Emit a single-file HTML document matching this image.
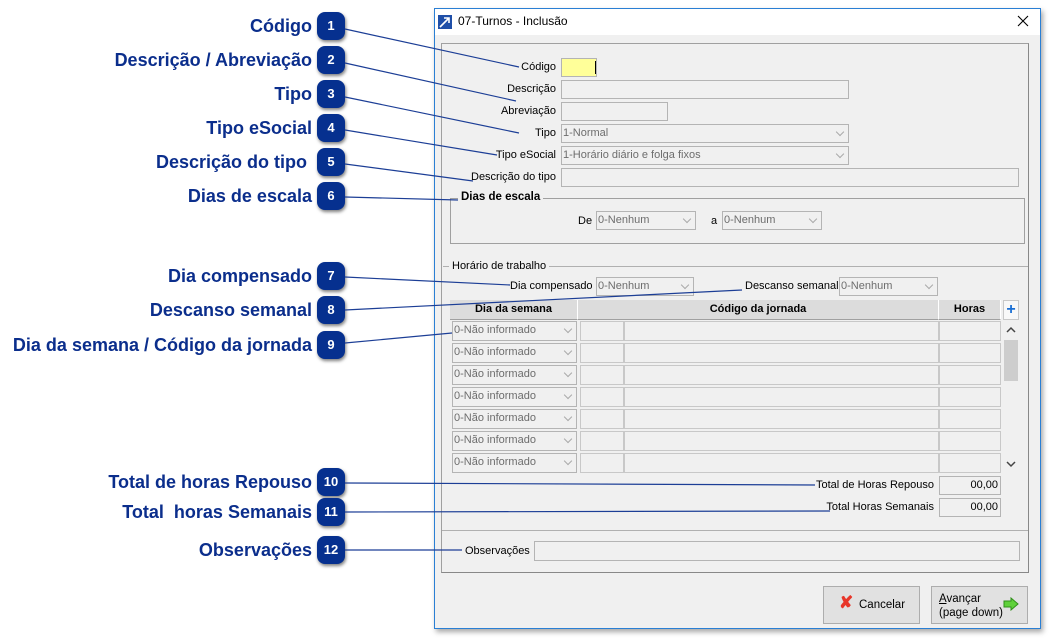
<!DOCTYPE html>
<html><head><meta charset="utf-8">
<style>
*{margin:0;padding:0;box-sizing:border-box}
body{width:1052px;height:641px;background:#fff;position:relative;overflow:hidden;font-family:"Liberation Sans",sans-serif}
.a{position:absolute}
.lbl{position:absolute;font-size:11px;color:#000;white-space:nowrap;line-height:13px}
.r{text-align:right}
.bl{position:absolute;right:740px;font-weight:bold;font-size:18px;color:#0b2e8c;white-space:nowrap;line-height:22px;text-align:right}
.bd{position:absolute;left:317px;width:28px;height:28px;border-radius:8px;background:#06308f;color:#fff;font-weight:bold;font-size:13px;text-align:center;line-height:28px;box-shadow:1px 2px 3px rgba(0,0,0,.5)}
.in{position:absolute;border:1px solid #b4b4b4;background:#f0f0f0;font-size:11px;color:#6d6d6d;line-height:16px;padding-left:1px;white-space:nowrap;overflow:hidden}
.cb:after{content:"";position:absolute;right:5px;top:4px;width:5px;height:5px;border-right:1px solid #aaa;border-bottom:1px solid #aaa;transform:rotate(45deg)}
.cell{position:absolute;border:1px solid #c8c8c8;background:#f0f0f0}
.hd{position:absolute;background:#dcdcdc;border-bottom:1px solid #a0a0a0;border-right:1px solid #fff;font-size:11px;font-weight:bold;text-align:center;line-height:18px}
.ln{position:absolute;background:#b0b0b0}
</style></head><body>

<div class="bl" style="top:15px">Código</div><div class="bd" style="top:12px">1</div>
<div class="bl" style="top:49px">Descrição / Abreviação</div><div class="bd" style="top:46px">2</div>
<div class="bl" style="top:83px">Tipo</div><div class="bd" style="top:80px">3</div>
<div class="bl" style="top:117px">Tipo eSocial</div><div class="bd" style="top:114px">4</div>
<div class="bl" style="top:151px;right:745px">Descrição do tipo</div><div class="bd" style="top:148px">5</div>
<div class="bl" style="top:185px">Dias de escala</div><div class="bd" style="top:182px">6</div>
<div class="bl" style="top:265px">Dia compensado</div><div class="bd" style="top:262px">7</div>
<div class="bl" style="top:299px">Descanso semanal</div><div class="bd" style="top:296px">8</div>
<div class="bl" style="top:334px">Dia da semana / Código da jornada</div><div class="bd" style="top:331px">9</div>
<div class="bl" style="top:471px">Total de horas Repouso</div><div class="bd" style="top:468px">10</div>
<div class="bl" style="top:501px">Total&nbsp; horas Semanais</div><div class="bd" style="top:498px">11</div>
<div class="bl" style="top:539px">Observações</div><div class="bd" style="top:536px">12</div>

<!-- window -->
<div class="a" style="left:434px;top:8px;width:607px;height:621px;border:1px solid #2a7fd4;background:#f0f0f0;box-shadow:2px 3px 5px rgba(0,0,0,.35)"></div>
<div class="a" style="left:435px;top:9px;width:605px;height:26px;background:#fff"></div>
<svg class="a" style="left:438px;top:15px" width="14" height="14"><rect width="14" height="14" fill="#1f4fa8"/><path d="M2 12 L11 3 M6 3 H11 V8" stroke="#fff" stroke-width="1.6" fill="none"/></svg>
<div class="lbl" style="left:458px;top:15px;font-size:12px">07-Turnos - Inclusão</div>
<svg class="a" style="left:1017px;top:15px" width="12" height="12"><path d="M1 1 L11 11 M11 1 L1 11" stroke="#000" stroke-width="1.1"/></svg>
<div class="a" style="left:441px;top:43px;width:588px;height:530px;border:1px solid #a0a0a0;border-right-color:#888;border-bottom-color:#888"></div>

<div class="lbl r" style="left:480px;width:76px;top:61px">Código</div>
<div class="in" style="left:561px;top:58px;width:36px;height:19px;background:#ffff99"></div>
<div class="a" style="left:595px;top:61px;width:1px;height:13px;background:#000"></div>
<div class="lbl r" style="left:480px;width:76px;top:83px">Descrição</div>
<div class="in" style="left:561px;top:80px;width:288px;height:19px"></div>
<div class="lbl r" style="left:480px;width:76px;top:105px">Abreviação</div>
<div class="in" style="left:561px;top:102px;width:107px;height:19px"></div>
<div class="lbl r" style="left:480px;width:76px;top:127px">Tipo</div>
<div class="in cb" style="left:561px;top:124px;width:288px;height:19px">1-Normal</div>
<div class="lbl r" style="left:460px;width:96px;top:149px">Tipo eSocial</div>
<div class="in cb" style="left:561px;top:146px;width:288px;height:19px">1-Horário diário e folga fixos</div>
<div class="lbl r" style="left:440px;width:116px;top:171px">Descrição do tipo</div>
<div class="in" style="left:561px;top:168px;width:458px;height:19px"></div>

<div class="a" style="left:450px;top:198px;width:575px;height:46px;border:1px solid #a0a0a0"></div>
<div class="lbl" style="left:458px;top:191px;background:#f0f0f0;padding:0 3px;font-weight:bold;font-size:11.5px">Dias de escala</div>
<div class="lbl" style="left:578px;top:215px">De</div>
<div class="in cb" style="left:596px;top:211px;width:100px;height:19px">0-Nenhum</div>
<div class="lbl" style="left:711px;top:215px">a</div>
<div class="in cb" style="left:722px;top:211px;width:100px;height:19px">0-Nenhum</div>

<div class="ln" style="left:443px;top:266px;width:585px;height:1px"></div>
<div class="lbl" style="left:449px;top:260px;background:#f0f0f0;padding:0 3px">Horário de trabalho</div>
<div class="lbl" style="left:510px;top:280px">Dia compensado</div>
<div class="in cb" style="left:596px;top:277px;width:98px;height:19px">0-Nenhum</div>
<div class="lbl" style="left:745px;top:280px">Descanso semanal</div>
<div class="in cb" style="left:839px;top:277px;width:99px;height:19px">0-Nenhum</div>

<div class="hd" style="left:450px;top:300px;width:128px;height:20px">Dia da semana</div>
<div class="hd" style="left:578px;top:300px;width:361px;height:20px">Código da jornada</div>
<div class="hd" style="left:939px;top:300px;width:62px;height:20px">Horas</div>
<div class="a" style="left:1003px;top:300px;width:16px;height:20px;border:1px solid #c8c8c8;background:#f8f8f8;color:#1a6fd4;font-weight:bold;font-size:16px;line-height:17px;text-align:center">+</div>

<div class="in cb" style="left:452px;top:321px;width:125px;height:20px">0-Não informado</div><div class="cell" style="left:580px;top:321px;width:44px;height:20px"></div><div class="cell" style="left:624px;top:321px;width:315px;height:20px"></div><div class="cell" style="left:939px;top:321px;width:62px;height:20px"></div>
<div class="in cb" style="left:452px;top:343px;width:125px;height:20px">0-Não informado</div><div class="cell" style="left:580px;top:343px;width:44px;height:20px"></div><div class="cell" style="left:624px;top:343px;width:315px;height:20px"></div><div class="cell" style="left:939px;top:343px;width:62px;height:20px"></div>
<div class="in cb" style="left:452px;top:365px;width:125px;height:20px">0-Não informado</div><div class="cell" style="left:580px;top:365px;width:44px;height:20px"></div><div class="cell" style="left:624px;top:365px;width:315px;height:20px"></div><div class="cell" style="left:939px;top:365px;width:62px;height:20px"></div>
<div class="in cb" style="left:452px;top:387px;width:125px;height:20px">0-Não informado</div><div class="cell" style="left:580px;top:387px;width:44px;height:20px"></div><div class="cell" style="left:624px;top:387px;width:315px;height:20px"></div><div class="cell" style="left:939px;top:387px;width:62px;height:20px"></div>
<div class="in cb" style="left:452px;top:409px;width:125px;height:20px">0-Não informado</div><div class="cell" style="left:580px;top:409px;width:44px;height:20px"></div><div class="cell" style="left:624px;top:409px;width:315px;height:20px"></div><div class="cell" style="left:939px;top:409px;width:62px;height:20px"></div>
<div class="in cb" style="left:452px;top:431px;width:125px;height:20px">0-Não informado</div><div class="cell" style="left:580px;top:431px;width:44px;height:20px"></div><div class="cell" style="left:624px;top:431px;width:315px;height:20px"></div><div class="cell" style="left:939px;top:431px;width:62px;height:20px"></div>
<div class="in cb" style="left:452px;top:453px;width:125px;height:20px">0-Não informado</div><div class="cell" style="left:580px;top:453px;width:44px;height:20px"></div><div class="cell" style="left:624px;top:453px;width:315px;height:20px"></div><div class="cell" style="left:939px;top:453px;width:62px;height:20px"></div>

<svg class="a" style="left:1003px;top:322px" width="16" height="152">
<path d="M4 10 L8 6 L12 10" stroke="#444" stroke-width="1.5" fill="none"/>
<rect x="1" y="18" width="14" height="41" fill="#cdcdcd"/>
<path d="M4 140 L8 144 L12 140" stroke="#444" stroke-width="1.5" fill="none"/>
</svg>

<div class="lbl r" style="left:780px;width:154px;top:479px">Total de Horas Repouso</div>
<div class="in" style="left:939px;top:476px;width:62px;height:19px;text-align:right;color:#000;padding-right:2px">00,00</div>
<div class="lbl r" style="left:780px;width:154px;top:501px">Total Horas Semanais</div>
<div class="in" style="left:939px;top:498px;width:62px;height:19px;text-align:right;color:#000;padding-right:2px">00,00</div>

<div class="ln" style="left:442px;top:530px;width:586px;height:1px"></div>
<div class="lbl" style="left:465px;top:545px">Observações</div>
<div class="in" style="left:534px;top:541px;width:486px;height:20px"></div>

<div class="a" style="left:823px;top:586px;width:97px;height:38px;border:1px solid #adadad;background:#e1e1e1"></div>
<div class="lbl" style="left:839px;top:596px;color:#e8362a;font-size:17px;font-weight:bold">✘</div>
<div class="lbl" style="left:859px;top:599px;font-size:11.5px">Cancelar</div>
<div class="a" style="left:931px;top:586px;width:97px;height:38px;border:1px solid #adadad;background:#e1e1e1"></div>
<div class="lbl" style="left:939px;top:592px;font-size:11.5px;line-height:14px"><u>A</u>vançar<br>(page down)</div>
<svg class="a" style="left:1003px;top:597px" width="16" height="14"><path d="M1 4 H8 V1 L15 7 L8 13 V10 H1 Z" fill="#5fd13a" stroke="#2f8f1a"/></svg>

<svg class="a" style="left:0;top:0" width="1052" height="641">
<g stroke="#1c3e96" stroke-width="1.2" fill="none">
<line x1="345" y1="29" x2="519" y2="67"/>
<line x1="345" y1="63" x2="516" y2="101"/>
<line x1="345" y1="97" x2="519" y2="133"/>
<line x1="345" y1="130" x2="497" y2="155"/>
<line x1="345" y1="164" x2="473" y2="181"/>
<line x1="345" y1="197" x2="458" y2="200"/>
<line x1="345" y1="277" x2="510" y2="285"/>
<line x1="345" y1="310" x2="742" y2="290"/>
<line x1="345" y1="343" x2="452" y2="333"/>
<line x1="345" y1="483" x2="815" y2="485"/>
<line x1="345" y1="512" x2="830" y2="511"/>
<line x1="345" y1="550" x2="462" y2="550"/>
</g></svg>
</body></html>
